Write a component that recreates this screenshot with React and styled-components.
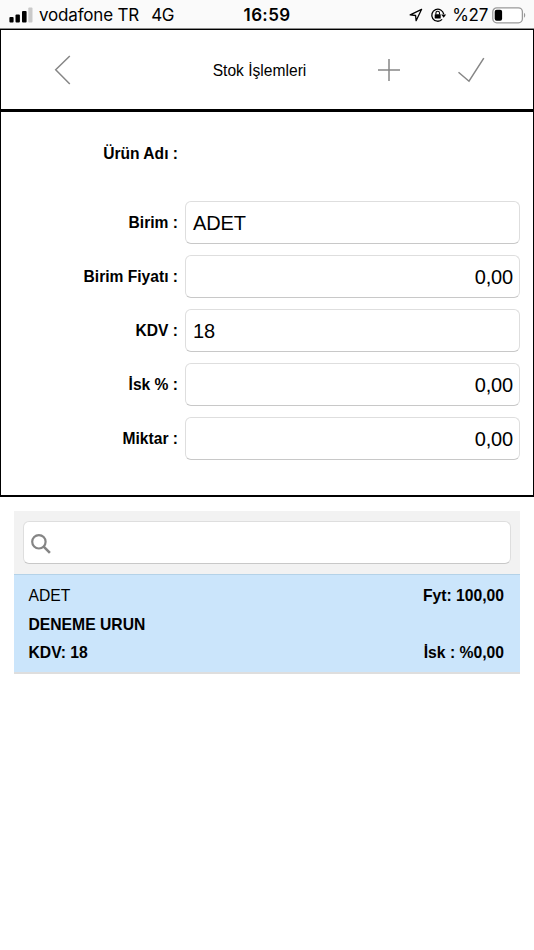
import styled, { createGlobalStyle } from 'styled-components';

const GlobalStyle = createGlobalStyle`
  * {
    box-sizing: border-box;
  }

  body {
    margin: 0;
    background-color: #fff;
    color: #000;
    font-family: "Liberation Sans", Arial, sans-serif;
  }
`

const Page = styled.div`
  width: 534px;
  height: 950px;
  overflow: hidden;
  background-color: #fff;
`

//STATUS BAR
const StatusBar = styled.div`
  display: grid;
  grid-template-columns: 1fr auto 1fr;
  align-items: center;
  height: 29px;
  padding: 2px 8px 0 9px;
  border-bottom: 1px solid #8c8c8c;
  background-color: #fafafa;
  font-family: Inter, sans-serif;
  font-size: 17px;
  line-height: 26px;
  white-space: pre;
`

const StatusGroup = styled.div`
  display: flex;
  align-items: center;
  justify-content: ${({ $end }) => ($end ? 'flex-end' : 'flex-start')};
`

const Carrier = styled.span`
  margin-left: 6px;
  letter-spacing: -0.17px;
`

const Network = styled.span`
  margin-left: 12px;
  letter-spacing: -0.3px;
`

const Clock = styled.span`
  margin-right: 1px;
  font-weight: 600;
  letter-spacing: 0.35px;
`

const Percent = styled.span`
  margin: 0 4px 0 5px;
  letter-spacing: -0.3px;
`

//TOOLBAR
const Toolbar = styled.header`
  display: grid;
  grid-template-columns: 123px 1fr 82px 82px 21px;
  align-items: center;
  height: 81px;
  border: 1px solid #000;
  justify-items: center;
`

const Title = styled.h1`
  margin: 0;
  padding: 3px 0 0 47px;
  font-size: 15.6px;
  font-weight: 400;
  line-height: 20px;
`

const IconButton = styled.button`
  display: flex;
  align-items: center;
  justify-content: center;
  padding: 0;
  border: none;
  background: none;
`

//FORM
const Form = styled.section`
  display: flex;
  flex-direction: column;
  gap: 11px;
  height: 387px;
  padding: 20px 13px 0 0;
  border: 1px solid #000;
  border-width: 2px 1px 2px 1px;
`

const Row = styled.div`
  display: grid;
  grid-template-columns: 177px 1fr;
  column-gap: 7px;
  align-items: center;
  height: 43px;
  margin-bottom: ${({ $spaced }) => ($spaced ? '15px' : '0')};
`

const Label = styled.label`
  text-align: right;
  font-size: 15.6px;
  font-weight: 700;
  line-height: 20px;
`

const Value = styled.div`
  display: flex;
  align-items: center;
  justify-content: ${({ $right }) => ($right ? 'flex-end' : 'flex-start')};
  height: 43px;
  padding: 0 6px 0 7px;
  border: 1px solid #dedede;
  border-bottom-color: #c8c8c8;
  border-radius: 6px;
  background-color: #fff;
  font-size: 20px;
  letter-spacing: -0.15px;
  line-height: 24px;
`

//PRODUCT LIST
const List = styled.section`
  width: 506px;
  margin: 14px 0 0 14px;
`

const SearchBar = styled.div`
  height: 63px;
  padding: 10px 9px;
  background-color: #f2f2f2;
`

const SearchBox = styled.div`
  display: flex;
  align-items: center;
  height: 43px;
  padding: 2px 0 0 7px;
  border: 1px solid #dedede;
  border-bottom-color: #c8c8c8;
  border-radius: 6px;
  background-color: #fff;
`

const Item = styled.div`
  display: flex;
  flex-direction: column;
  height: 100px;
  padding: 7px 16px 0 14.5px;
  border-top: 1px solid #b4d2e8;
  border-bottom: 2px solid #dedede;
  background-color: #cbe5fb;
`

const ItemLine = styled.div`
  display: flex;
  justify-content: space-between;
  font-size: 15.7px;
  font-weight: ${({ $light }) => ($light ? 400 : 700)};
  line-height: 28.5px;
`

const Strong = styled.span`
  font-weight: 700;
`

const SignalIcon = () => (
  <svg width="24" height="16" viewBox="0 0 24 16">
    <rect x="0.4" y="10" width="4.2" height="5.5" rx="1" />
    <rect x="6.5" y="7.5" width="4.4" height="8" rx="1" />
    <rect x="13" y="4" width="4.6" height="11.5" rx="1" />
    <rect x="19.3" y="0.6" width="4.2" height="14.9" rx="1" fill="#cacaca" />
  </svg>
)

const LocationIcon = () => (
  <svg width="14" height="14" viewBox="0 0 14 14">
    <path d="M12.6 1.3 1.2 6.9l5.4.6.5 5.2z" fill="none" stroke="#000" strokeWidth="1.3" strokeLinejoin="round" />
  </svg>
)

const LockSvg = styled.svg`
  margin-left: 7px;
`

const RotationLockIcon = () => (
  <LockSvg width="17" height="16" viewBox="0 0 17 16">
    <path d="M12.1 12.4A6 6 0 1 1 13.7 7.2" fill="none" stroke="#000" strokeWidth="1.3" />
    <path d="M11.2 7.4h4.9l-2.4 3.3z" />
    <rect x="4.7" y="7.2" width="6" height="4.4" rx="0.6" />
    <path d="M5.9 7.4V6a1.8 1.8 0 0 1 3.6 0v1.4" fill="none" stroke="#000" strokeWidth="1.1" />
  </LockSvg>
)

const BatteryIcon = () => (
  <svg width="34" height="17" viewBox="0 0 34 17">
    <rect x="0.8" y="0.8" width="29.6" height="15" rx="4" fill="#fff" stroke="#999" strokeWidth="1.3" />
    <rect x="2.7" y="2.8" width="7.4" height="11" rx="2" />
    <path d="M32 5.8c1.6.8 1.6 4.2 0 5z" fill="#999" />
  </svg>
)

const BackIcon = () => (
  <svg width="18" height="32" viewBox="0 0 18 32">
    <path d="M15.8 2 1.7 15.8 15.8 30" fill="none" stroke="#868686" strokeWidth="1.5" />
  </svg>
)

const PlusIcon = () => (
  <svg width="24" height="24" viewBox="0 0 24 24">
    <path d="M12 1v22M1 12h22" fill="none" stroke="#868686" strokeWidth="1.5" />
  </svg>
)

const CheckIcon = () => (
  <svg width="28" height="26" viewBox="0 0 28 26">
    <path d="M1.5 15.2 12 24.2 26.8 1.2" fill="none" stroke="#868686" strokeWidth="1.5" />
  </svg>
)

const SearchIcon = () => (
  <svg width="20" height="20" viewBox="0 0 20 20">
    <circle cx="7.9" cy="7.8" r="6.7" fill="none" stroke="#858585" strokeWidth="2.2" />
    <path d="m12.4 12.3 6.5 6.5" stroke="#858585" strokeWidth="2.6" />
  </svg>
)

const fields = [
  { label: 'Birim :', value: 'ADET' },
  { label: 'Birim Fiyatı :', value: '0,00', right: true },
  { label: 'KDV :', value: '18' },
  { label: 'İsk % :', value: '0,00', right: true },
  { label: 'Miktar :', value: '0,00', right: true },
]

const App = () => {
  return (
    <Page>
      <GlobalStyle />
      <StatusBar>
        <StatusGroup>
          <SignalIcon />
          <Carrier>vodafone TR</Carrier>
          <Network>4G</Network>
        </StatusGroup>
        <Clock>16:59</Clock>
        <StatusGroup $end>
          <LocationIcon />
          <RotationLockIcon />
          <Percent>%27</Percent>
          <BatteryIcon />
        </StatusGroup>
      </StatusBar>

      <Toolbar>
        <IconButton aria-label="Geri"><BackIcon /></IconButton>
        <Title>Stok İşlemleri</Title>
        <IconButton aria-label="Ekle"><PlusIcon /></IconButton>
        <IconButton aria-label="Kaydet"><CheckIcon /></IconButton>
      </Toolbar>

      <Form>
        <Row $spaced>
          <Label>Ürün Adı :</Label>
        </Row>
        {fields.map((field) => (
          <Row key={field.label}>
            <Label>{field.label}</Label>
            <Value $right={field.right}>{field.value}</Value>
          </Row>
        ))}
      </Form>

      <List>
        <SearchBar>
          <SearchBox><SearchIcon /></SearchBox>
        </SearchBar>
        <Item>
          <ItemLine $light>
            <span>ADET</span>
            <Strong>Fyt: 100,00</Strong>
          </ItemLine>
          <ItemLine>DENEME URUN</ItemLine>
          <ItemLine>
            <span>KDV: 18</span>
            <span>İsk : %0,00</span>
          </ItemLine>
        </Item>
      </List>
    </Page>
  )
}

export default App;
